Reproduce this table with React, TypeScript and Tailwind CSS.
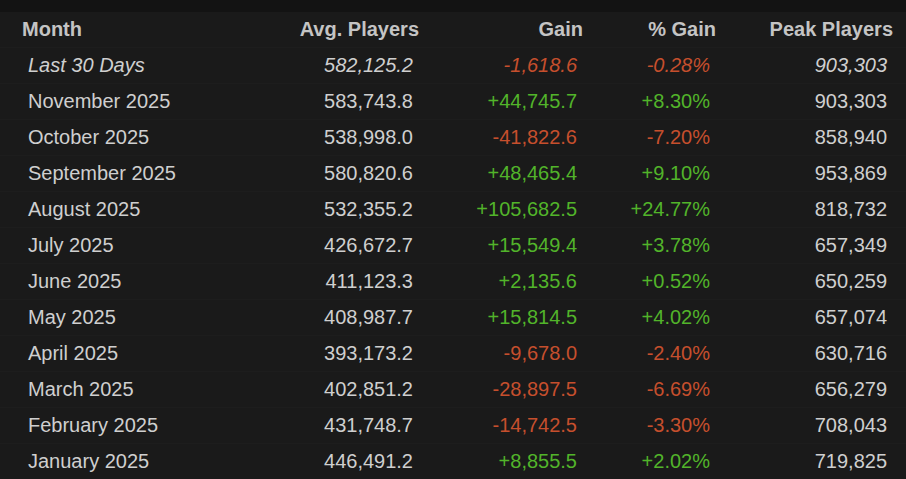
import React from "react";

type Row = { m: string; avg: string; gain: string; pct: string; peak: string; italic?: boolean };

const rows: Row[] = [
  { m: "Last 30 Days", avg: "582,125.2", gain: "-1,618.6", pct: "-0.28%", peak: "903,303", italic: true },
  { m: "November 2025", avg: "583,743.8", gain: "+44,745.7", pct: "+8.30%", peak: "903,303" },
  { m: "October 2025", avg: "538,998.0", gain: "-41,822.6", pct: "-7.20%", peak: "858,940" },
  { m: "September 2025", avg: "580,820.6", gain: "+48,465.4", pct: "+9.10%", peak: "953,869" },
  { m: "August 2025", avg: "532,355.2", gain: "+105,682.5", pct: "+24.77%", peak: "818,732" },
  { m: "July 2025", avg: "426,672.7", gain: "+15,549.4", pct: "+3.78%", peak: "657,349" },
  { m: "June 2025", avg: "411,123.3", gain: "+2,135.6", pct: "+0.52%", peak: "650,259" },
  { m: "May 2025", avg: "408,987.7", gain: "+15,814.5", pct: "+4.02%", peak: "657,074" },
  { m: "April 2025", avg: "393,173.2", gain: "-9,678.0", pct: "-2.40%", peak: "630,716" },
  { m: "March 2025", avg: "402,851.2", gain: "-28,897.5", pct: "-6.69%", peak: "656,279" },
  { m: "February 2025", avg: "431,748.7", gain: "-14,742.5", pct: "-3.30%", peak: "708,043" },
  { m: "January 2025", avg: "446,491.2", gain: "+8,855.5", pct: "+2.02%", peak: "719,825" },
];

export default function App() {
  return (
    <div
      className="w-[906px] h-[479px] overflow-hidden bg-[#131313] pt-[12px]"
      style={{ fontFamily: '"Liberation Sans", Arial, sans-serif' }}
    >
      <table className="w-[906px] table-fixed border-collapse bg-[#1a1a1a] text-[20px] leading-[24px]">
        <colgroup>
          <col className="w-[250px]" />
          <col className="w-[175px]" />
          <col className="w-[164px]" />
          <col className="w-[133px]" />
          <col className="w-[184px]" />
        </colgroup>
        <thead>
          <tr className="h-[35px] text-[#c4c4c4] font-bold">
            <th className="text-left pl-[22px] align-middle">Month</th>
            <th className="text-right pr-[6px] align-middle">Avg. Players</th>
            <th className="text-right pr-[6px] align-middle">Gain</th>
            <th className="text-right pr-[6px] align-middle">% Gain</th>
            <th className="text-right pr-[13px] align-middle">Peak Players</th>
          </tr>
        </thead>
        <tbody>
          {rows.map((r) => {
            const neg = r.gain.startsWith("-");
            const c = neg ? "text-[#c64f2d]" : "text-[#52b42a]";
            return (
              <tr
                key={r.m}
                className={`h-[36px] border-t border-[#1d1d1d] text-[#cfcfcf] ${r.italic ? "italic" : ""}`}
              >
                <td className="pl-[28px] align-middle">{r.m}</td>
                <td className="text-right pr-[12px] align-middle">{r.avg}</td>
                <td className={`text-right pr-[12px] align-middle ${c}`}>{r.gain}</td>
                <td className={`text-right pr-[12px] align-middle ${c}`}>{r.pct}</td>
                <td className="text-right pr-[19px] align-middle">{r.peak}</td>
              </tr>
            );
          })}
        </tbody>
      </table>
    </div>
  );
}
